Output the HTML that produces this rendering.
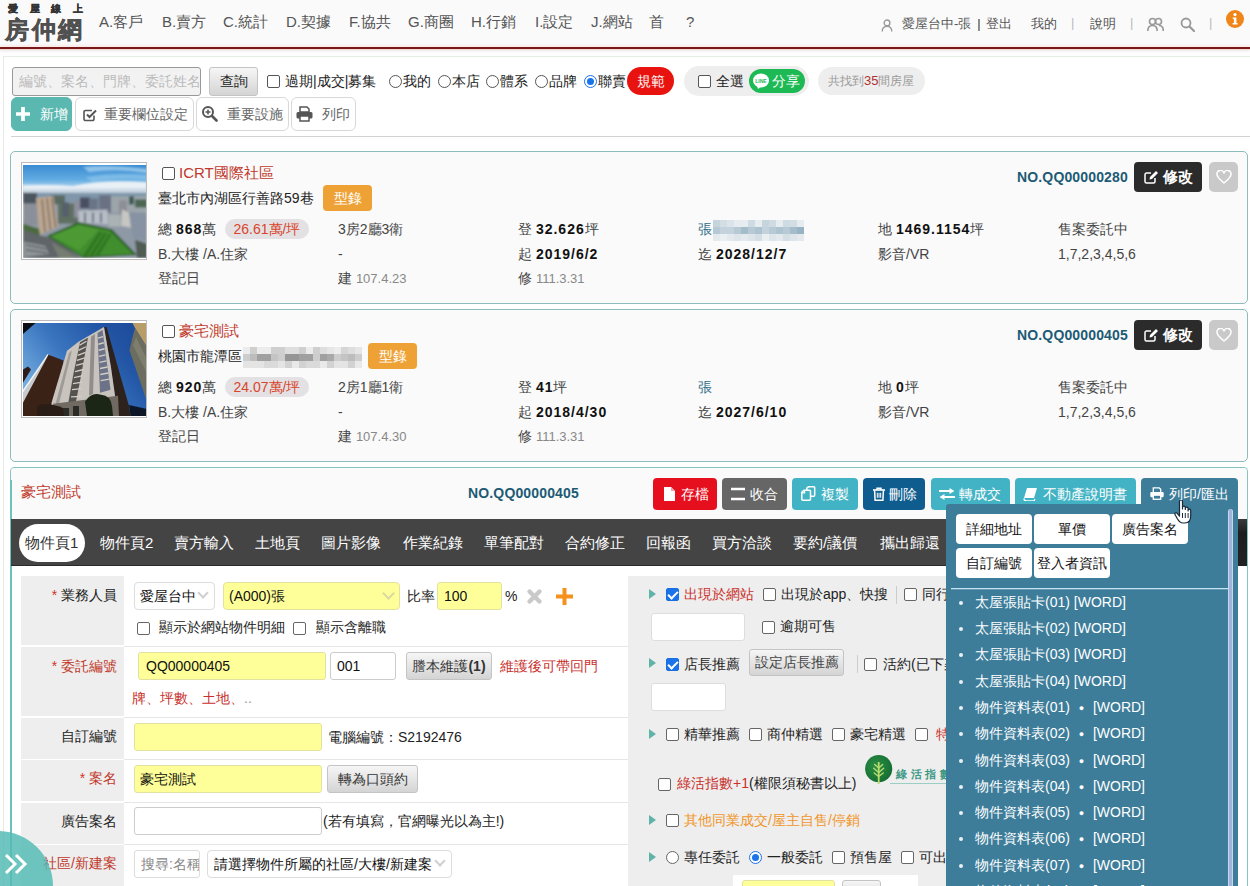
<!DOCTYPE html>
<html lang="zh-Hant">
<head>
<meta charset="utf-8">
<title>房仲網</title>
<style>
*{box-sizing:border-box;margin:0;padding:0}
html,body{width:1250px;height:886px;overflow:hidden;background:#fff}
body{font-family:"Liberation Sans",sans-serif;font-size:14px;color:#333;position:relative}
.a{position:absolute;white-space:nowrap}
.t{position:absolute;white-space:nowrap;line-height:20px;height:20px}
/* header */
#hd{left:0;top:0;width:1250px;height:47px;background:#fafafa}
#hdline{left:0;top:47px;width:1250px;height:2px;background:#7a1717;box-shadow:0 1px 0 #f7d6d6,0 2px 3px rgba(0,0,0,.12),0 -2px 2px rgba(250,200,200,.35)}
.nav{font-size:15px;color:#555;top:13px}
.hr{font-size:13px;color:#555;top:15px}
.sep{color:#bbb;font-size:13px;top:15px}
/* toolbar */
.cb{position:absolute;width:13px;height:13px;border:1px solid #555;border-radius:2px;background:#fff}
.cb.on{background:#1a73e8;border-color:#1a73e8}
.cb.on:after{content:"";position:absolute;left:3px;top:0px;width:4px;height:8px;border:solid #fff;border-width:0 2px 2px 0;transform:rotate(45deg)}
.rd{position:absolute;width:13px;height:13px;border:1px solid #555;border-radius:50%;background:#fff}
.rd.on{border-color:#1a73e8}
.rd.on:after{content:"";position:absolute;left:2px;top:2px;width:7px;height:7px;border-radius:50%;background:#1a73e8}
.gbtn{position:absolute;border:1px solid #c4c4c4;border-radius:3px;background:linear-gradient(#f6f6f6,#d4d4d4);color:#222;text-align:center;white-space:nowrap}
.wbtn{position:absolute;border:1px solid #d8d8d8;border-radius:6px;background:#fff;color:#666;font-size:14px;height:34px;top:97px;line-height:32px;white-space:nowrap}
.pill{position:absolute;border-radius:15px;background:#eee}
/* cards */
.card{position:absolute;left:10px;width:1238px;height:153px;border:1px solid #8dbcbc;border-radius:5px;background:#fafafa}
.card .t{color:#444}
.g{color:#666}
.b{font-weight:bold;color:#111;letter-spacing:1px}
.no,.card .t.no{font-weight:bold;color:#1d5b75;font-size:14px;letter-spacing:.15px}
.ppill{position:absolute;height:20px;border-radius:10px;background:#e3e1e3;color:#d9452b;font-size:14px;line-height:20px;text-align:center}
.obtn{position:absolute;width:49px;height:26px;border-radius:4px;background:#eea236;color:#fff;font-size:14px;line-height:26px;text-align:center}
.ebtn{position:absolute;left:1123px;top:10px;width:68px;height:30px;border-radius:4px;background:#2b2b2b;color:#fff;font-weight:bold;font-size:15px;line-height:30px}
.hbtn{position:absolute;left:1198px;top:10px;width:29px;height:30px;border-radius:5px;background:#c9c9c9}
.photo{position:absolute;left:10px;top:10px;width:126px;height:98px;border:1px solid #bbb;padding:1px;background:#fff;overflow:hidden}

/* detail */
.abtn{position:absolute;top:478px;height:32px;border-radius:4px;color:#fff;font-size:14px;line-height:32px}
.abtn span{position:absolute;top:0}
.tab{position:absolute;top:533px;height:20px;line-height:20px;font-size:15px;color:#fff;white-space:nowrap}
.lab{position:absolute;left:21px;width:103px;background:#eee;text-align:right;padding-right:7px;font-size:14px;color:#222;white-space:nowrap}
.lab.r{color:#c0392b}
.lab i{font-style:normal;color:#d0342c}
.sepl{position:absolute;left:124px;width:504px;height:1px;background:#e6e6e6}
.inp{position:absolute;height:28px;border:1px solid #ccc;border-radius:3px;background:#fff;font-size:14px;line-height:26px;padding-left:7px;color:#111;white-space:nowrap;overflow:hidden}
.inp.y{background:#ffff99;border-color:#e2e2a0}
.chev{position:absolute;width:9px;height:9px;border:solid #d0d0d0;border-width:0 2.500px 2.500px 0;transform:rotate(45deg)}
.red{color:#c9302c}
.tri{position:absolute;width:0;height:0;border-left:7px solid #5fb3a8;border-top:5px solid transparent;border-bottom:5px solid transparent}

.dd{position:absolute;white-space:nowrap;color:#fff;font-size:14px;line-height:20px;height:20px;left:975px}
.ddb{position:absolute;left:959px;width:4px;height:4px;border-radius:50%;background:#e8f0f4}
.dwb{position:absolute;width:76px;height:30px;border-radius:4px;background:#fff;color:#111;font-size:14px;line-height:30px;text-align:center;white-space:nowrap}
.k{color:#222}
</style>
</head>
<body>
<!-- HEADER -->
<div class="a" id="hd"></div>
<div class="a" id="hdline"></div>
<div class="a" style="left:8px;top:3px;font-size:10px;font-weight:900;color:#333;-webkit-text-stroke:.3px #333;letter-spacing:11.700px;line-height:12px">愛屋線上</div>
<div class="a" style="left:5px;top:15px;font-size:24px;font-weight:900;color:#505050;-webkit-text-stroke:.45px #505050;line-height:30px;letter-spacing:2.500px">房仲網</div>
<div class="a nav" style="left:99px">A.客戶</div>
<div class="a nav" style="left:162px">B.賣方</div>
<div class="a nav" style="left:223px">C.統計</div>
<div class="a nav" style="left:286px">D.契據</div>
<div class="a nav" style="left:349px">F.協共</div>
<div class="a nav" style="left:408px">G.商圈</div>
<div class="a nav" style="left:471px">H.行銷</div>
<div class="a nav" style="left:535px">I.設定</div>
<div class="a nav" style="left:591px">J.網站</div>
<div class="a nav" style="left:649px">首</div>
<div class="a nav" style="left:686px">?</div>
<div class="a hr" style="left:902px">愛屋台中-張<span style="color:#333;margin:0 5px 0 6px">|</span>登出</div>
<div class="a hr" style="left:1031px">我的</div>
<div class="a sep" style="left:1071px">|</div>
<div class="a hr" style="left:1090px">說明</div>
<div class="a sep" style="left:1130px">|</div>
<div class="a sep" style="left:1209px">|</div>

<!-- PAGE FRAME -->
<div class="a" style="left:3px;top:56px;width:1247px;height:840px;border:1px solid #e4ece4;border-right:0;border-bottom:0"></div>
<!-- TOOLBAR ROW 1 -->
<div class="a" style="left:12px;top:67px;width:189px;height:29px;border:1px solid #999;border-radius:3px;background:#f2f2f2;color:#bbb;font-size:14px;line-height:27px;padding-left:6px;overflow:hidden">編號、案名、門牌、委託姓名</div>
<div class="gbtn" style="left:209px;top:67px;width:49px;height:29px;line-height:27px;font-size:14px">查詢</div>
<div class="cb" style="left:267px;top:75px"></div>
<div class="t" style="left:285px;top:71px;color:#222">過期|成交|募集</div>
<div class="rd" style="left:389px;top:75px"></div><div class="t" style="left:403px;top:71px;color:#222">我的</div>
<div class="rd" style="left:438px;top:75px"></div><div class="t" style="left:452px;top:71px;color:#222">本店</div>
<div class="rd" style="left:486px;top:75px"></div><div class="t" style="left:500px;top:71px;color:#222">體系</div>
<div class="rd" style="left:535px;top:75px"></div><div class="t" style="left:549px;top:71px;color:#222">品牌</div>
<div class="rd on" style="left:584px;top:75px"></div><div class="t" style="left:598px;top:71px;color:#222">聯賣</div>
<div class="pill" style="left:627px;top:67px;width:47px;height:28px;background:#e8130f;color:#fff;font-size:14px;line-height:28px;text-align:center">規範</div>
<div class="pill" style="left:684px;top:66px;width:125px;height:30px;background:#eee"></div>
<div class="cb" style="left:698px;top:75px"></div>
<div class="t" style="left:716px;top:71px;color:#222">全選</div>
<div class="pill" style="left:749px;top:69px;width:56px;height:24px;border-radius:12px;background:#1db954"></div>
<svg class="a" style="left:752px;top:72px" width="18" height="18" viewBox="0 0 18 18"><ellipse cx="9" cy="8.5" rx="8" ry="7" fill="#fff"/><path d="M5 14 L6 17 L10 14 Z" fill="#fff"/><text x="9" y="10.5" font-family="Liberation Sans" font-size="5" font-weight="bold" fill="#1db954" text-anchor="middle">LINE</text></svg>
<div class="t" style="left:772px;top:71px;color:#fff">分享</div>
<div class="pill" style="left:818px;top:67px;width:107px;height:28px;border-radius:14px;background:#eee"></div>
<div class="t" style="left:828px;top:71px;font-size:12px;color:#999">共找到<span style="color:#b03030;font-size:13px">35</span>間房屋</div>
<!-- TOOLBAR ROW 2 -->
<div class="wbtn" style="left:11px;width:61px;background:#5bb8b0;border-color:#5bb8b0;color:#fff;padding-left:28px">新增</div>
<svg class="a" style="left:16px;top:107px" width="14" height="14" viewBox="0 0 15 15"><path d="M5.5 0h4v5.5H15v4H9.500V15h-4V9.500H0v-4h5.500z" fill="#fff"/></svg>
<div class="wbtn" style="left:75px;width:119px;padding-left:28px">重要欄位設定</div>
<svg class="a" style="left:83px;top:108px" width="14" height="14" viewBox="0 0 14 14"><path d="M11 7.500V11a1.500 1.500 0 0 1-1.500 1.500h-7A1.500 1.500 0 0 1 1 11V4a1.500 1.500 0 0 1 1.500-1.500H9" fill="none" stroke="#555" stroke-width="1.600"/><path d="M4 6.500l2.500 2.500L13 2.500" fill="none" stroke="#555" stroke-width="2"/></svg>
<div class="wbtn" style="left:196px;width:93px;padding-left:30px">重要設施</div>
<svg class="a" style="left:201px;top:105px" width="17" height="17" viewBox="0 0 17 17"><circle cx="7" cy="7" r="5" fill="none" stroke="#555" stroke-width="2"/><path d="M11 11l4.500 4.500" stroke="#555" stroke-width="2.600" stroke-linecap="round"/><path d="M4.500 7h5M7 4.500v5" stroke="#555" stroke-width="1.500"/></svg>
<div class="wbtn" style="left:291px;width:65px;padding-left:30px">列印</div>
<svg class="a" style="left:296px;top:106px" width="17" height="16" viewBox="0 0 17 16"><path d="M4 1h7l2 2v3H4z" fill="#fff" stroke="#555" stroke-width="1.500"/><rect x="0.500" y="6" width="16" height="6.500" rx="1.500" fill="#555"/><rect x="4" y="10" width="9" height="5" fill="#fff" stroke="#555" stroke-width="1.500"/></svg>
<div class="a" style="left:11px;top:136px;width:1239px;height:1px;background:#d2d2d2"></div>
<!-- CARDS -->
<div class="card" style="top:151px">
<div class="photo"><svg width="124" height="93" viewBox="0 0 124 92" preserveAspectRatio="none" style="display:block;margin:1px 0 0 0">
<defs><linearGradient id="sk1" x1="0" y1="0" x2="0" y2="1"><stop offset="0" stop-color="#3a8bd2"/><stop offset=".5" stop-color="#62ace2"/><stop offset=".8" stop-color="#b9d8ee"/><stop offset="1" stop-color="#c9d6df"/></linearGradient>
<filter id="bl1" x="-5%" y="-5%" width="110%" height="110%"><feGaussianBlur stdDeviation="0.9"/></filter></defs>
<rect width="124" height="29" fill="url(#sk1)"/>
<g filter="url(#bl1)">
<path d="M60 2 Q85 -1 124 4 L124 8 Q95 3 66 7Z" fill="#a9d3ef" opacity=".75"/>
<path d="M62 12 Q92 7 124 10 L124 15 Q95 12 70 17Z" fill="#8cc4ea" opacity=".7"/>
<path d="M0 20 Q30 19 50 21 Q80 14 124 17 L124 28 L0 28Z" fill="#e9f0f6"/>
<path d="M0 24 L124 23 L124 28 L0 28Z" fill="#c4d3e0" opacity=".8"/>
<rect y="27.500" width="124" height="65" fill="#8e99a5"/>
<rect y="27.500" width="124" height="9" fill="#7f96ab"/>
<rect x="0" y="27.500" width="14" height="11" fill="#4b5560"/>
<rect x="28" y="30" width="14" height="9" fill="#596b62"/>
<rect x="0" y="38" width="14" height="21" fill="#8a8f99"/>
<rect x="35" y="38" width="20" height="20" fill="#5e6f62"/>
<rect x="39" y="37" width="7" height="14" fill="#55606a"/>
<rect x="51" y="35" width="6" height="17" fill="#8c8e9b"/>
<rect x="57" y="32" width="10" height="11" fill="#4a4f63"/>
<rect x="66" y="33" width="9" height="12" fill="#6b7688"/>
<rect x="76" y="30" width="12" height="17" fill="#6b7183"/>
<rect x="88" y="31" width="36" height="16" fill="#9ba5aa"/>
<rect x="106" y="31" width="5" height="8" fill="#3f5a52"/>
<rect x="112" y="34" width="12" height="8" fill="#4e6652"/>
<rect x="96" y="35" width="8" height="14" fill="#8e8e96"/>
<path d="M55 45.500 L84.500 44 L85 58.500 L56 57Z" fill="#b6bdc7"/>
<path d="M62 47v10M70 47v10M78 47v10" stroke="#5a616d" stroke-width="1.600"/>
<rect x="85.500" y="49" width="12" height="12" fill="#aab2b4"/>
<path d="M99 44 L106 47 L108 62 L98 60Z" fill="#c6c6c2"/>
<path d="M106 46.500 L124 48 L124 75 L110 72Z" fill="#8793a3"/>
<path d="M13 32.500 L30.500 31 L35 61 L16.500 69Z" fill="#bba691"/>
<path d="M19 34l3 32M24 33l3.500 31M29 32.500l3.500 29" stroke="#7d6c5f" stroke-width="1.500"/>
<path d="M0 58 L16 63 L17 70 L0 66Z" fill="#4c6a3e"/>
<path d="M0 64 L18 70 L30 72 L58 92 L0 92Z" fill="#5f6568"/>
<path d="M1 76 L22 80 L26 88 L1 91Z" fill="#90959a"/>
<path d="M3 79l20 4M3 84l21 3" stroke="#55595c" stroke-width="1.200"/>
<path d="M28 76 L56 92 L36 92Z" fill="#747b70"/>
<path d="M24 70 L55.500 56.500 L89 63.500 L114 89 L60 92Z" fill="#2f5f25"/>
<path d="M27 70.500 L55.700 58.500 L87 65 L110 88 L60 90.500Z" fill="#418e2d"/>
<path d="M29 70.500 L55.700 59.500 L76 64 L56 84Z" fill="#4d9a34"/>
<path d="M60 90 L76 66l3 .6L64 90.300zM66 90 L81 67l3 .6L70 90zM72 89.500 L86 68l2.500 .5L76 89.300z" fill="#2f7424"/>
<path d="M112 74 L124 78 L124 92 L114 92Z" fill="#4f5b53"/>
</g></svg></div>
<div class="cb" style="left:151px;top:15px"></div>
<div class="t" style="left:168px;top:11px;font-size:15px;color:#c0392b">ICRT國際社區</div>
<div class="t" style="left:147px;top:36px;color:#222">臺北市內湖區行善路59巷</div>
<div class="obtn" style="left:312px;top:33px">型錄</div>
<div class="t g" style="left:147px;top:67px">總 <span class="b">868</span>萬</div>
<div class="ppill" style="left:214px;top:67px;width:84px">26.61萬/坪</div>
<div class="t g" style="left:327px;top:67px">3房2廳3衛</div>
<div class="t g" style="left:507px;top:67px">登 <span class="b">32.626</span>坪</div>
<div class="t" style="left:687px;top:67px;color:#2f6e88">張<svg width="91" height="21" viewBox="0 0 91 21" style="display:inline-block;vertical-align:middle;margin-left:1px" shape-rendering="crispEdges"><rect x="0" y="0" width="7" height="7" fill="#c6d4dc"/><rect x="7" y="0" width="7" height="7" fill="#d2dde4"/><rect x="14" y="0" width="7" height="7" fill="#dbe4ea"/><rect x="21" y="0" width="7" height="7" fill="#e6ecf0"/><rect x="28" y="0" width="7" height="7" fill="#e6ecf0"/><rect x="35" y="0" width="7" height="7" fill="#cfdbe3"/><rect x="42" y="0" width="7" height="7" fill="#e6ecf0"/><rect x="49" y="0" width="7" height="7" fill="#c6d4dc"/><rect x="56" y="0" width="7" height="7" fill="#cfdbe3"/><rect x="63" y="0" width="7" height="7" fill="#e6ecf0"/><rect x="70" y="0" width="7" height="7" fill="#cfdbe3"/><rect x="77" y="0" width="7" height="7" fill="#d2dde4"/><rect x="84" y="0" width="7" height="7" fill="#e6ecf0"/><rect x="0" y="7" width="7" height="7" fill="#b7c9d4"/><rect x="7" y="7" width="7" height="7" fill="#c3d2dc"/><rect x="14" y="7" width="7" height="7" fill="#c3d2dc"/><rect x="21" y="7" width="7" height="7" fill="#b7c9d4"/><rect x="28" y="7" width="7" height="7" fill="#a5bccb"/><rect x="35" y="7" width="7" height="7" fill="#b7c9d4"/><rect x="42" y="7" width="7" height="7" fill="#aec3d0"/><rect x="49" y="7" width="7" height="7" fill="#c3d2dc"/><rect x="56" y="7" width="7" height="7" fill="#b7c9d4"/><rect x="63" y="7" width="7" height="7" fill="#aec3d0"/><rect x="70" y="7" width="7" height="7" fill="#b7c9d4"/><rect x="77" y="7" width="7" height="7" fill="#a5bccb"/><rect x="84" y="7" width="7" height="7" fill="#98b3c4"/><rect x="0" y="14" width="7" height="7" fill="#e3e9ed"/><rect x="7" y="14" width="7" height="7" fill="#eaeff2"/><rect x="14" y="14" width="7" height="7" fill="#e3e9ed"/><rect x="21" y="14" width="7" height="7" fill="#dde5ea"/><rect x="28" y="14" width="7" height="7" fill="#e3e9ed"/><rect x="35" y="14" width="7" height="7" fill="#dde5ea"/><rect x="42" y="14" width="7" height="7" fill="#d4dee5"/><rect x="49" y="14" width="7" height="7" fill="#eaeff2"/><rect x="56" y="14" width="7" height="7" fill="#dde5ea"/><rect x="63" y="14" width="7" height="7" fill="#e3e9ed"/><rect x="70" y="14" width="7" height="7" fill="#d4dee5"/><rect x="77" y="14" width="7" height="7" fill="#dde5ea"/><rect x="84" y="14" width="7" height="7" fill="#e3e9ed"/></svg></div>
<div class="t g" style="left:867px;top:67px">地 <span class="b">1469.1154</span>坪</div>
<div class="t g" style="left:1047px;top:67px">售案委託中</div>
<div class="t g" style="left:147px;top:92px">B.大樓 /A.住家</div>
<div class="t g" style="left:327px;top:92px">-</div>
<div class="t g" style="left:507px;top:92px">起 <span class="b">2019/6/2</span></div>
<div class="t g" style="left:687px;top:92px">迄 <span class="b">2028/12/7</span></div>
<div class="t g" style="left:867px;top:92px">影音/VR</div>
<div class="t g" style="left:1047px;top:92px">1,7,2,3,4,5,6</div>
<div class="t g" style="left:147px;top:116px">登記日</div>
<div class="t g" style="left:327px;top:116px">建 <span style="font-size:13px;color:#888">107.4.23</span></div>
<div class="t g" style="left:507px;top:116px">修 <span style="font-size:13px;color:#888">111.3.31</span></div>
<div class="t no" style="left:1006px;top:15px">NO.QQ00000280</div>
<div class="ebtn"><svg width="15" height="14" viewBox="0 0 15 14" style="position:absolute;left:10px;top:8px"><path d="M11 8v3.500a1.500 1.500 0 0 1-1.500 1.500h-7A1.500 1.500 0 0 1 1 11.500v-7A1.500 1.500 0 0 1 2.500 3H7" fill="none" stroke="#fff" stroke-width="1.500"/><path d="M5.500 9.500l.5-2.500 6-6 2 2-6 6z" fill="#fff"/></svg><span style="position:absolute;left:29px;top:0">修改</span></div>
<div class="hbtn"><svg width="16" height="14" viewBox="0 0 16 14" style="position:absolute;left:7px;top:8px"><path d="M8 13 C2 8 1 6.500 1 4.500 A3.200 3.200 0 0 1 8 3.300 A3.200 3.200 0 0 1 15 4.500 C15 6.500 14 8 8 13Z" fill="none" stroke="#fff" stroke-width="1.500"/></svg></div>
</div>
<div class="card" style="top:309px">
<div class="photo"><svg width="124" height="93" viewBox="0 0 124 92" preserveAspectRatio="none" style="display:block;margin:1px 0 0 0">
<defs><linearGradient id="sk2" x1="0" y1=".6" x2="1" y2="0"><stop offset="0" stop-color="#72abdf"/><stop offset=".35" stop-color="#3b76c0"/><stop offset=".7" stop-color="#2255a4"/><stop offset="1" stop-color="#1b4796"/></linearGradient>
<filter id="bl2" x="-5%" y="-5%" width="110%" height="110%"><feGaussianBlur stdDeviation="0.55"/></filter></defs>
<rect width="124" height="92" fill="url(#sk2)"/>
<g filter="url(#bl2)">
<path d="M0 0 L12.500 0 L0 11Z" fill="#0b0e16"/>
<path d="M0 46 L5 43 L8 46 L0 59Z" fill="#2c1c1c"/>
<path d="M24.500 31 L0 69 L0 80 L27 33Z" fill="#c9cacd"/>
<path d="M24.500 31 L0 66 L0 69 L25.500 31.500Z" fill="#f4f4f4"/>
<path d="M25.500 31.500 L40.500 37 L40 41 L29 92 L0 92 L0 79Z" fill="#3a2019"/>
<path d="M81 4 L83.500 4 L106 82 L107.500 92 L94 92 L88 44Z" fill="#2f221d"/>
<path d="M81 4 L55.500 18.500 L44 27.500 L28.500 79 L28.500 92 L95 92 L88 44Z" fill="#c8c3bc"/>
<path d="M57 19 L65 14.500 L56.500 60 L50 92 L43 92 L50.500 50Z" fill="#55524f"/>
<path d="M56.500 22l7-4M55.500 27l7.500-3.500M54.700 32l7.800-3M53.800 37l8-2.500M53 42l8-2M52 48l8.500-2M51 54l9-2M50 60l9.500-1.500M49 66l10-1M48 73l10.500-.5" stroke="#d2cec7" stroke-width="1.300"/>
<path d="M46 30 L49 27 L36 80 L32 82Z" fill="#8d8a86" opacity=".7"/>
<path d="M68 13.500 L72 11 L70 70 L66 72Z" fill="#7d7b7c" opacity=".75"/>
<path d="M74.500 10 L79.500 7 L87.500 66 L77 69Z" fill="#5c647e" opacity=".85"/>
<path d="M75 15l5-1.500M75.300 21l5.500-1.500M75.700 27l6-1.500M76 33l6.500-1.500M76.500 39l7-1.500M77 45l7.500-1.500M77.300 51l8-1.500M77.700 57l8.500-1.500" stroke="#d2cec7" stroke-width="1.400"/>
<path d="M30 80 L95 72 L96 92 L28.500 92Z" fill="#6f6a62"/>
<path d="M40 84h6v8h-6zM50 82h6v10h-6z" fill="#2c2a28"/>
<path d="M14 82 Q25 78 40 84 L41 92 L14 92Z" fill="#2b1d18"/>
<path d="M62 78 Q68 68 78 71 Q88 72 89 82 L90 92 L64 92Z" fill="#1b2516"/>
<path d="M109.500 0 L124 0 L124 24 L112 5Z" fill="#b99d69"/>
<path d="M112 5 L124 24 L124 78 L106.500 27 L109 16Z" fill="#6c6d5f"/>
<path d="M113 14 L124 36 L124 50 L110 22Z" fill="#8a8b78" opacity=".6"/>
<path d="M106 81 L124 85 L124 92 L107.500 92Z" fill="#0e1826"/>
</g></svg></div>
<div class="cb" style="left:151px;top:15px"></div>
<div class="t" style="left:168px;top:11px;font-size:15px;color:#c0392b">豪宅測試</div>
<div class="t" style="left:147px;top:36px;color:#222">桃園市龍潭區<svg width="119" height="21" viewBox="0 0 119 21" style="display:inline-block;vertical-align:middle;margin-left:1px" shape-rendering="crispEdges"><rect x="0" y="0" width="7" height="7" fill="#ececec"/><rect x="7" y="0" width="7" height="7" fill="#cfcfcf"/><rect x="14" y="0" width="7" height="7" fill="#ececec"/><rect x="21" y="0" width="7" height="7" fill="#ececec"/><rect x="28" y="0" width="7" height="7" fill="#cfcfcf"/><rect x="35" y="0" width="7" height="7" fill="#cfcfcf"/><rect x="42" y="0" width="7" height="7" fill="#dedede"/><rect x="49" y="0" width="7" height="7" fill="#dedede"/><rect x="56" y="0" width="7" height="7" fill="#cfcfcf"/><rect x="63" y="0" width="7" height="7" fill="#ececec"/><rect x="70" y="0" width="7" height="7" fill="#cfcfcf"/><rect x="77" y="0" width="7" height="7" fill="#dedede"/><rect x="84" y="0" width="7" height="7" fill="#e6e6e6"/><rect x="91" y="0" width="7" height="7" fill="#ececec"/><rect x="98" y="0" width="7" height="7" fill="#d5d5d5"/><rect x="105" y="0" width="7" height="7" fill="#dedede"/><rect x="112" y="0" width="7" height="7" fill="#e6e6e6"/><rect x="0" y="7" width="7" height="7" fill="#cdcdcd"/><rect x="7" y="7" width="7" height="7" fill="#bdbdbd"/><rect x="14" y="7" width="7" height="7" fill="#a0a0a0"/><rect x="21" y="7" width="7" height="7" fill="#a0a0a0"/><rect x="28" y="7" width="7" height="7" fill="#c4c4c4"/><rect x="35" y="7" width="7" height="7" fill="#cdcdcd"/><rect x="42" y="7" width="7" height="7" fill="#959595"/><rect x="49" y="7" width="7" height="7" fill="#959595"/><rect x="56" y="7" width="7" height="7" fill="#a0a0a0"/><rect x="63" y="7" width="7" height="7" fill="#a0a0a0"/><rect x="70" y="7" width="7" height="7" fill="#cdcdcd"/><rect x="77" y="7" width="7" height="7" fill="#a0a0a0"/><rect x="84" y="7" width="7" height="7" fill="#a9a9a9"/><rect x="91" y="7" width="7" height="7" fill="#cdcdcd"/><rect x="98" y="7" width="7" height="7" fill="#c4c4c4"/><rect x="105" y="7" width="7" height="7" fill="#bdbdbd"/><rect x="112" y="7" width="7" height="7" fill="#cdcdcd"/><rect x="0" y="14" width="7" height="7" fill="#e4e4e4"/><rect x="7" y="14" width="7" height="7" fill="#e4e4e4"/><rect x="14" y="14" width="7" height="7" fill="#e4e4e4"/><rect x="21" y="14" width="7" height="7" fill="#dadada"/><rect x="28" y="14" width="7" height="7" fill="#dadada"/><rect x="35" y="14" width="7" height="7" fill="#e4e4e4"/><rect x="42" y="14" width="7" height="7" fill="#d2d2d2"/><rect x="49" y="14" width="7" height="7" fill="#e9e9e9"/><rect x="56" y="14" width="7" height="7" fill="#d2d2d2"/><rect x="63" y="14" width="7" height="7" fill="#dadada"/><rect x="70" y="14" width="7" height="7" fill="#dadada"/><rect x="77" y="14" width="7" height="7" fill="#e9e9e9"/><rect x="84" y="14" width="7" height="7" fill="#d2d2d2"/><rect x="91" y="14" width="7" height="7" fill="#e4e4e4"/><rect x="98" y="14" width="7" height="7" fill="#e4e4e4"/><rect x="105" y="14" width="7" height="7" fill="#d2d2d2"/><rect x="112" y="14" width="7" height="7" fill="#e9e9e9"/></svg></div>
<div class="obtn" style="left:357px;top:33px">型錄</div>
<div class="t g" style="left:147px;top:67px">總 <span class="b">920</span>萬</div>
<div class="ppill" style="left:214px;top:67px;width:84px">24.07萬/坪</div>
<div class="t g" style="left:327px;top:67px">2房1廳1衛</div>
<div class="t g" style="left:507px;top:67px">登 <span class="b">41</span>坪</div>
<div class="t" style="left:687px;top:67px;color:#2f6e88">張</div>
<div class="t g" style="left:867px;top:67px">地 <span class="b">0</span>坪</div>
<div class="t g" style="left:1047px;top:67px">售案委託中</div>
<div class="t g" style="left:147px;top:92px">B.大樓 /A.住家</div>
<div class="t g" style="left:327px;top:92px">-</div>
<div class="t g" style="left:507px;top:92px">起 <span class="b">2018/4/30</span></div>
<div class="t g" style="left:687px;top:92px">迄 <span class="b">2027/6/10</span></div>
<div class="t g" style="left:867px;top:92px">影音/VR</div>
<div class="t g" style="left:1047px;top:92px">1,7,2,3,4,5,6</div>
<div class="t g" style="left:147px;top:116px">登記日</div>
<div class="t g" style="left:327px;top:116px">建 <span style="font-size:13px;color:#888">107.4.30</span></div>
<div class="t g" style="left:507px;top:116px">修 <span style="font-size:13px;color:#888">111.3.31</span></div>
<div class="t no" style="left:1006px;top:15px">NO.QQ00000405</div>
<div class="ebtn"><svg width="15" height="14" viewBox="0 0 15 14" style="position:absolute;left:10px;top:8px"><path d="M11 8v3.500a1.500 1.500 0 0 1-1.500 1.500h-7A1.500 1.500 0 0 1 1 11.500v-7A1.500 1.500 0 0 1 2.500 3H7" fill="none" stroke="#fff" stroke-width="1.500"/><path d="M5.500 9.500l.5-2.500 6-6 2 2-6 6z" fill="#fff"/></svg><span style="position:absolute;left:29px;top:0">修改</span></div>
<div class="hbtn"><svg width="16" height="14" viewBox="0 0 16 14" style="position:absolute;left:7px;top:8px"><path d="M8 13 C2 8 1 6.500 1 4.500 A3.200 3.200 0 0 1 8 3.300 A3.200 3.200 0 0 1 15 4.500 C15 6.500 14 8 8 13Z" fill="none" stroke="#fff" stroke-width="1.500"/></svg></div>
</div>

<!-- DETAIL PANEL -->
<div class="a" style="left:10px;top:467px;width:1238px;height:430px;border:1px solid #86c4c4;border-radius:4px 4px 0 0;background:#fff"></div>
<div class="a" style="left:11px;top:468px;width:1236px;height:51px;background:#fafafa;border-radius:4px 4px 0 0"></div>
<div class="a" style="left:10px;top:480px;width:2px;height:410px;background:#6cc2be"></div>
<div class="t" style="left:21px;top:482px;font-size:15px;color:#c0392b">豪宅測試</div>
<div class="t no" style="left:468px;top:483px">NO.QQ00000405</div>
<div class="abtn" style="left:653px;width:64px;background:#e60f1e"><svg width="11" height="14" viewBox="0 0 11 14" style="position:absolute;left:11px;top:9px"><path d="M0 0h7l4 4v10H0z" fill="#fff"/><path d="M7 0v4h4" fill="#f3a0a6"/></svg><span style="left:28px">存檔</span></div>
<div class="abtn" style="left:722px;width:65px;background:#666"><svg width="14" height="14" viewBox="0 0 14 14" style="position:absolute;left:9px;top:9px"><path d="M0 2h14M0 12h14" stroke="#fff" stroke-width="2.500"/></svg><span style="left:28px">收合</span></div>
<div class="abtn" style="left:792px;width:66px;background:#42b3c4"><svg width="15" height="15" viewBox="0 0 15 15" style="position:absolute;left:9px;top:8px"><path d="M5.800 4V2.200L7.500 .8h5.200a1 1 0 0 1 1 1v7.400a1 1 0 0 1-1 1H9.500" fill="none" stroke="#fff" stroke-width="1.500"/><path d="M.8 6.200L3 4.200h5.500a1 1 0 0 1 1 1v8a1 1 0 0 1-1 1H1.800a1 1 0 0 1-1-1z" fill="none" stroke="#fff" stroke-width="1.500"/><path d="M3.600 4.200v2.600H.8" fill="none" stroke="#fff" stroke-width="1.200"/></svg><span style="left:29px">複製</span></div>
<div class="abtn" style="left:863px;width:62px;background:#0f5d8f"><svg width="12" height="14" viewBox="0 0 12 14" style="position:absolute;left:10px;top:9px"><path d="M0 3h12" stroke="#fff" stroke-width="1.600"/><path d="M4 3V1.200h4V3" fill="none" stroke="#fff" stroke-width="1.400"/><path d="M1.600 3.500l.5 9.700h7.800l.5-9.700" fill="none" stroke="#fff" stroke-width="1.500"/><path d="M4.300 5.800v5M6 5.800v5M7.700 5.800v5" stroke="#fff" stroke-width="1"/></svg><span style="left:26px">刪除</span></div>
<div class="abtn" style="left:931px;width:79px;background:#42b3c4"><svg width="16" height="12" viewBox="0 0 16 12" style="position:absolute;left:8px;top:10px"><path d="M0 3h11M5 9h11" stroke="#fff" stroke-width="2"/><path d="M10.500 0l5 3-5 3zM5.500 6l-5 3 5 3z" fill="#fff"/></svg><span style="left:28px">轉成交</span></div>
<div class="abtn" style="left:1015px;width:121px;background:#42b3c4"><svg width="15" height="13" viewBox="0 0 15 13" style="position:absolute;left:8px;top:10px"><path d="M4 0h10l-3 10H1z" fill="#fff"/><path d="M1 10.500c0 1.500 1 2.500 2.500 2.500H11l.8-2" fill="none" stroke="#fff" stroke-width="1.400"/></svg><span style="left:28px">不動產說明書</span></div>
<div class="abtn" style="left:1141px;width:97px;height:42px;background:#3d7d9a;border-radius:4px 4px 0 0"><svg width="14" height="13" viewBox="0 0 15 14" style="position:absolute;left:9px;top:9px"><path d="M3.500 1h6.500l1.500 1.500V6h-8z" fill="#3d7d9a" stroke="#fff" stroke-width="1.400"/><rect x=".3" y="5.500" width="14.400" height="5.500" rx="1.300" fill="#fff"/><rect x="3.500" y="8.800" width="8" height="4.400" fill="#3d7d9a" stroke="#fff" stroke-width="1.400"/></svg><span style="left:28px">列印/匯出</span></div>
<!-- TAB BAR -->
<div class="a" style="left:11px;top:519px;width:1236px;height:47px;background:#444;border-bottom:1px solid #2a2a2a"></div>
<div class="a" style="left:1238px;top:519px;width:9px;height:47px;background:linear-gradient(#3a3a3a,#1e1e1e 30%,#222)"></div>
<div class="a" style="left:19px;top:524px;width:66px;height:38px;border-radius:19px;background:#fff"></div>
<div class="tab" style="left:25px;color:#333">物件頁1</div>
<div class="tab" style="left:100px">物件頁2</div>
<div class="tab" style="left:174px">賣方輸入</div>
<div class="tab" style="left:255px">土地頁</div>
<div class="tab" style="left:321px">圖片影像</div>
<div class="tab" style="left:403px">作業紀錄</div>
<div class="tab" style="left:484px">單筆配對</div>
<div class="tab" style="left:565px">合約修正</div>
<div class="tab" style="left:646px">回報函</div>
<div class="tab" style="left:712px">買方洽談</div>
<div class="tab" style="left:793px">要約/議價</div>
<div class="tab" style="left:880px">攜出歸還</div>
<!-- LEFT FORM -->
<div class="lab" style="top:576px;height:69px;line-height:38px"><i>*</i> 業務人員</div>
<div class="lab r" style="top:647px;height:69px;line-height:38px"><i>*</i> 委託編號</div>
<div class="lab" style="top:718px;height:41px;line-height:37px">自訂編號</div>
<div class="lab r" style="top:760px;height:41px;line-height:37px"><i>*</i> 案名</div>
<div class="lab" style="top:803px;height:41px;line-height:36px">廣告案名</div>
<div class="lab r" style="top:845px;height:41px;line-height:37px">社區/新建案</div>
<div class="sepl" style="top:646px"></div><div class="sepl" style="top:717px"></div><div class="sepl" style="top:759px"></div><div class="sepl" style="top:802px"></div><div class="sepl" style="top:844px"></div>
<!-- row1 -->
<div class="inp" style="left:134px;top:582px;width:81px;padding-left:5px;border-color:#ddd;border-radius:4px">愛屋台中</div><div class="chev" style="left:199px;top:589px;width:8px;height:8px"></div>
<div class="inp y" style="left:223px;top:582px;width:177px;padding-left:5px;border-radius:4px">(A000)張</div><div class="chev" style="left:384px;top:589px;border-color:#d8d8a0"></div>
<div class="t" style="left:407px;top:586px;color:#222">比率</div>
<div class="inp y" style="left:437px;top:582px;width:65px;padding-left:6px">100</div>
<div class="t" style="left:505px;top:586px;color:#222">%</div>
<svg class="a" style="left:526px;top:588px" width="17" height="17" viewBox="0 0 17 17"><path d="M3.500 3.500l10 10M13.500 3.500l-10 10" stroke="#c9c9c9" stroke-width="4.400" stroke-linecap="round"/></svg>
<svg class="a" style="left:556px;top:588px" width="17" height="17" viewBox="0 0 17 17"><path d="M8.500 0v17M0 8.500h17" stroke="#f5921e" stroke-width="4"/></svg>
<div class="cb" style="left:137px;top:622px;border-color:#666"></div><div class="t" style="left:159px;top:617px;color:#222">顯示於網站物件明細</div>
<div class="cb" style="left:293px;top:622px;border-color:#666"></div><div class="t" style="left:316px;top:617px;color:#222">顯示含離職</div>
<!-- row2 -->
<div class="inp y" style="left:138px;top:652px;width:188px">QQ00000405</div>
<div class="inp" style="left:330px;top:652px;width:66px;padding-left:6px">001</div>
<div class="gbtn" style="left:406px;top:652px;width:86px;height:28px;line-height:26px;font-size:14px;color:#333">謄本維護<b>(1)</b></div>
<div class="t red" style="left:500px;top:656px">維護後可帶回門</div>
<div class="t red" style="left:132px;top:688px">牌、坪數、土地、<span style="color:#999">..</span></div>
<!-- row3 -->
<div class="inp y" style="left:134px;top:723px;width:188px"></div>
<div class="t" style="left:328px;top:727px;color:#222">電腦編號：S2192476</div>
<!-- row4 -->
<div class="inp y" style="left:134px;top:765px;width:188px;padding-left:5px">豪宅測試</div>
<div class="gbtn" style="left:327px;top:765px;width:91px;height:28px;line-height:26px;font-size:14px;color:#333">轉為口頭約</div>
<!-- row5 -->
<div class="inp" style="left:134px;top:807px;width:188px"></div>
<div class="t" style="left:323px;top:811px;color:#222">(若有填寫，官網曝光以為主!)</div>
<!-- row6 -->
<div class="inp" style="left:134px;top:850px;width:66px;color:#888;padding-left:6px;border-color:#ddd">搜尋:名稱</div>
<div class="inp" style="left:207px;top:850px;width:245px;padding-left:6px;border-color:#ddd;border-radius:4px">請選擇物件所屬的社區/大樓/新建案</div><div class="chev" style="left:436px;top:857px;width:8px;height:8px"></div>
<!-- teal corner -->
<div class="a" style="left:-57px;top:831px;width:110px;height:110px;border-radius:50%;background:rgba(84,186,180,.84)"></div>
<svg class="a" style="left:4px;top:853px" width="24" height="22" viewBox="0 0 24 22"><path d="M2 2l9 9-9 9M12 2l9 9-9 9" fill="none" stroke="#fff" stroke-width="3"/></svg>

<!-- RIGHT FORM -->
<div class="a" style="left:628px;top:576px;width:319px;height:320px;background:#eee"></div>
<div class="tri" style="left:649px;top:589px"></div><div class="cb on" style="left:666px;top:588px;border-color:#1a6fe0"></div>
<div class="t red" style="left:684px;top:584px">出現於網站</div><div class="cb" style="left:763px;top:588px;border-color:#666"></div>
<div class="t k" style="left:781px;top:584px">出現於app、快搜</div>
<div class="a" style="left:896px;top:586px;width:1px;height:18px;background:#ccc"></div><div class="cb" style="left:904px;top:588px;border-color:#666"></div>
<div class="t k" style="left:922px;top:584px">同行</div>
<div class="inp" style="left:651px;top:613px;width:94px;border-color:#ddd"></div><div class="cb" style="left:762px;top:621px;border-color:#666"></div>
<div class="t k" style="left:780px;top:616px">逾期可售</div>
<div class="tri" style="left:649px;top:658px"></div><div class="cb on" style="left:666px;top:658px;border-color:#1a6fe0"></div>
<div class="t k" style="left:684px;top:654px">店長推薦</div>
<div class="gbtn" style="left:749px;top:649px;width:95px;height:27px;line-height:25px;font-size:14px;color:#444">設定店長推薦</div>
<div class="a" style="left:857px;top:655px;width:1px;height:18px;background:#ccc"></div><div class="cb" style="left:864px;top:658px;border-color:#666"></div>
<div class="t k" style="left:883px;top:654px">活約(已下架</div>
<div class="inp" style="left:651px;top:683px;width:75px;border-color:#ddd"></div>
<div class="tri" style="left:649px;top:729px"></div><div class="cb" style="left:666px;top:728px;border-color:#666"></div>
<div class="t k" style="left:684px;top:724px">精華推薦</div><div class="cb" style="left:749px;top:728px;border-color:#666"></div>
<div class="t k" style="left:767px;top:724px">商仲精選</div><div class="cb" style="left:832px;top:728px;border-color:#666"></div>
<div class="t k" style="left:850px;top:724px">豪宅精選</div><div class="cb" style="left:915px;top:728px;border-color:#666"></div>
<div class="t red" style="left:936px;top:724px">特</div><div class="cb" style="left:658px;top:778px;border-color:#666"></div>
<div class="t" style="left:677px;top:773px"><span class="red">綠活指數+1</span><span class="k">(權限須秘書以上)</span></div>
<svg class="a" style="left:864px;top:754px" width="30" height="32" viewBox="0 0 30 32"><defs><radialGradient id="tg" cx=".4" cy=".4" r=".7"><stop offset="0" stop-color="#2a8f45"/><stop offset="1" stop-color="#136a30"/></radialGradient></defs><circle cx="14.700" cy="14.700" r="13.600" fill="url(#tg)"/><path d="M14.700 8v22" stroke="#b9dc6e" stroke-width="1.800" fill="none"/><path d="M14.700 14l-4-3.500M14.700 14l4-3.500M14.700 18.500l-5-4.200M14.700 18.500l5-4.200M14.700 22.500l-4.500-3.500M14.700 22.500l4.500-3.500" stroke="#b9dc6e" stroke-width="1.400" fill="none" stroke-linecap="round"/></svg>
<div class="t" style="left:896px;top:764px;font-family:'Liberation Serif',serif;font-size:11px;font-weight:bold;color:#3e9a86;letter-spacing:3.600px">綠活指數</div>
<div class="a" style="left:890px;top:783px;width:60px;height:1px;background:#9ccfc4"></div>
<div class="tri" style="left:649px;top:815px"></div><div class="cb" style="left:666px;top:814px;border-color:#666"></div>
<div class="t" style="left:684px;top:810px;color:#f0962a">其他同業成交/屋主自售/停銷</div>
<div class="tri" style="left:649px;top:852px"></div>
<div class="rd" style="left:666px;top:851px;border-color:#666"></div>
<div class="t k" style="left:684px;top:847px">專任委託</div>
<div class="rd on" style="left:749px;top:851px"></div>
<div class="t k" style="left:767px;top:847px">一般委託</div><div class="cb" style="left:832px;top:851px;border-color:#666"></div>
<div class="t k" style="left:850px;top:847px">預售屋</div><div class="cb" style="left:901px;top:851px;border-color:#666"></div>
<div class="t k" style="left:919px;top:847px">可出</div>
<div class="a" style="left:733px;top:875px;width:185px;height:20px;background:#fff"></div>
<div class="inp y" style="left:742px;top:880px;width:93px"></div>
<div class="gbtn" style="left:842px;top:880px;width:39px;height:20px"></div>
<!-- DROPDOWN -->
<div class="a" style="left:946px;top:504px;width:292px;height:390px;background:#3d7d9a;border-radius:3px 0 0 0"></div>
<div class="a" style="left:1228px;top:509px;width:5px;height:380px;background:#9fb3dc;border-left:1px solid #c9d6ee;border-right:1px solid #c9d6ee;border-radius:3px 3px 0 0"></div>
<div class="dwb" style="left:956px;top:514px">詳細地址</div>
<div class="dwb" style="left:1034px;top:514px">單價</div>
<div class="dwb" style="left:1112px;top:514px">廣告案名</div>
<div class="dwb" style="left:956px;top:548px">自訂編號</div>
<div class="dwb" style="left:1034px;top:548px">登入者資訊</div>
<div class="a" style="left:951px;top:588px;width:277px;height:1px;background:#c5e3f3;box-shadow:0 1px 0 rgba(197,227,243,.3)"></div>
<div class="ddb" style="top:601px"></div><div class="dd" style="top:592px">太屋張貼卡(01) [WORD]</div>
<div class="ddb" style="top:627px"></div><div class="dd" style="top:618px">太屋張貼卡(02) [WORD]</div>
<div class="ddb" style="top:653px"></div><div class="dd" style="top:644px">太屋張貼卡(03) [WORD]</div>
<div class="ddb" style="top:680px"></div><div class="dd" style="top:671px">太屋張貼卡(04) [WORD]</div>
<div class="ddb" style="top:706px"></div><div class="dd" style="top:697px">物件資料表(01)<span style="display:inline-block;width:23px;text-align:center;font-size:9px;position:relative;left:0px;top:-1px">●</span>[WORD]</div>
<div class="ddb" style="top:732px"></div><div class="dd" style="top:723px">物件資料表(02)<span style="display:inline-block;width:23px;text-align:center;font-size:9px;position:relative;left:0px;top:-1px">●</span>[WORD]</div>
<div class="ddb" style="top:759px"></div><div class="dd" style="top:750px">物件資料表(03)<span style="display:inline-block;width:23px;text-align:center;font-size:9px;position:relative;left:0px;top:-1px">●</span>[WORD]</div>
<div class="ddb" style="top:785px"></div><div class="dd" style="top:776px">物件資料表(04)<span style="display:inline-block;width:23px;text-align:center;font-size:9px;position:relative;left:0px;top:-1px">●</span>[WORD]</div>
<div class="ddb" style="top:811px"></div><div class="dd" style="top:802px">物件資料表(05)<span style="display:inline-block;width:23px;text-align:center;font-size:9px;position:relative;left:0px;top:-1px">●</span>[WORD]</div>
<div class="ddb" style="top:837px"></div><div class="dd" style="top:828px">物件資料表(06)<span style="display:inline-block;width:23px;text-align:center;font-size:9px;position:relative;left:0px;top:-1px">●</span>[WORD]</div>
<div class="ddb" style="top:864px"></div><div class="dd" style="top:855px">物件資料表(07)<span style="display:inline-block;width:23px;text-align:center;font-size:9px;position:relative;left:0px;top:-1px">●</span>[WORD]</div>
<div class="ddb" style="top:890px"></div><div class="dd" style="top:881px">物件資料表(08)<span style="display:inline-block;width:23px;text-align:center;font-size:9px;position:relative;left:0px;top:-1px">●</span>[WORD]</div>

<!-- CURSOR -->
<svg class="a" style="left:1174px;top:500px" width="18" height="24" viewBox="0 0 18 24"><path d="M5.500 1.500a1.500 1.500 0 0 1 3 0V9l0 -1.500a1.400 1.400 0 0 1 2.800 0V9.500l0-1a1.400 1.400 0 0 1 2.800 0V11l0-.5a1.300 1.300 0 0 1 2.600 0V16c0 4-2 7-6 7H9c-2.500 0-4-1.500-5.500-4L1 14.500c-.7-1.300 1-2.500 2-1.300L5.500 16z" fill="#fff" stroke="#1a2a3a" stroke-width="1.200" stroke-linejoin="round"/><path d="M8.500 13v5M11.300 13v5M14.100 13v5" stroke="#1a2a3a" stroke-width="1"/></svg>
<!-- HEADER ICONS -->
<svg class="a" style="left:881px;top:19px" width="12" height="13" viewBox="0 0 13 15"><circle cx="6.500" cy="4.500" r="3.300" fill="none" stroke="#999" stroke-width="1.600"/><path d="M1 14.500c0-4 2.500-6 5.500-6s5.500 2 5.500 6" fill="none" stroke="#999" stroke-width="1.600"/></svg>
<svg class="a" style="left:1147px;top:17px" width="17" height="15" viewBox="0 0 17 15"><circle cx="5.500" cy="4.500" r="3" fill="none" stroke="#999" stroke-width="1.600"/><path d="M.8 14c0-3.500 2-5.500 4.700-5.500s4.700 2 4.700 5.500" fill="none" stroke="#999" stroke-width="1.600"/><circle cx="11.500" cy="4.500" r="3" fill="none" stroke="#999" stroke-width="1.600"/><path d="M12 8.500c2.500 0 4.300 2 4.300 5.500" fill="none" stroke="#999" stroke-width="1.600"/></svg>
<svg class="a" style="left:1180px;top:17px" width="15" height="15" viewBox="0 0 15 15"><circle cx="6" cy="6" r="4.500" fill="none" stroke="#999" stroke-width="1.800"/><path d="M9.500 9.500l4.500 4.500" stroke="#999" stroke-width="2.200" stroke-linecap="round"/></svg>
<svg class="a" style="left:1226px;top:10px" width="18" height="18" viewBox="0 0 18 18"><circle cx="9" cy="9" r="9" fill="#f08519"/><circle cx="9" cy="4.600" r="1.600" fill="#fff"/><path d="M6.800 7.500h3.600v5.500h1.200v1.500H6.600V13h1.300V9H6.800z" fill="#fff"/></svg>
</body>
</html>
